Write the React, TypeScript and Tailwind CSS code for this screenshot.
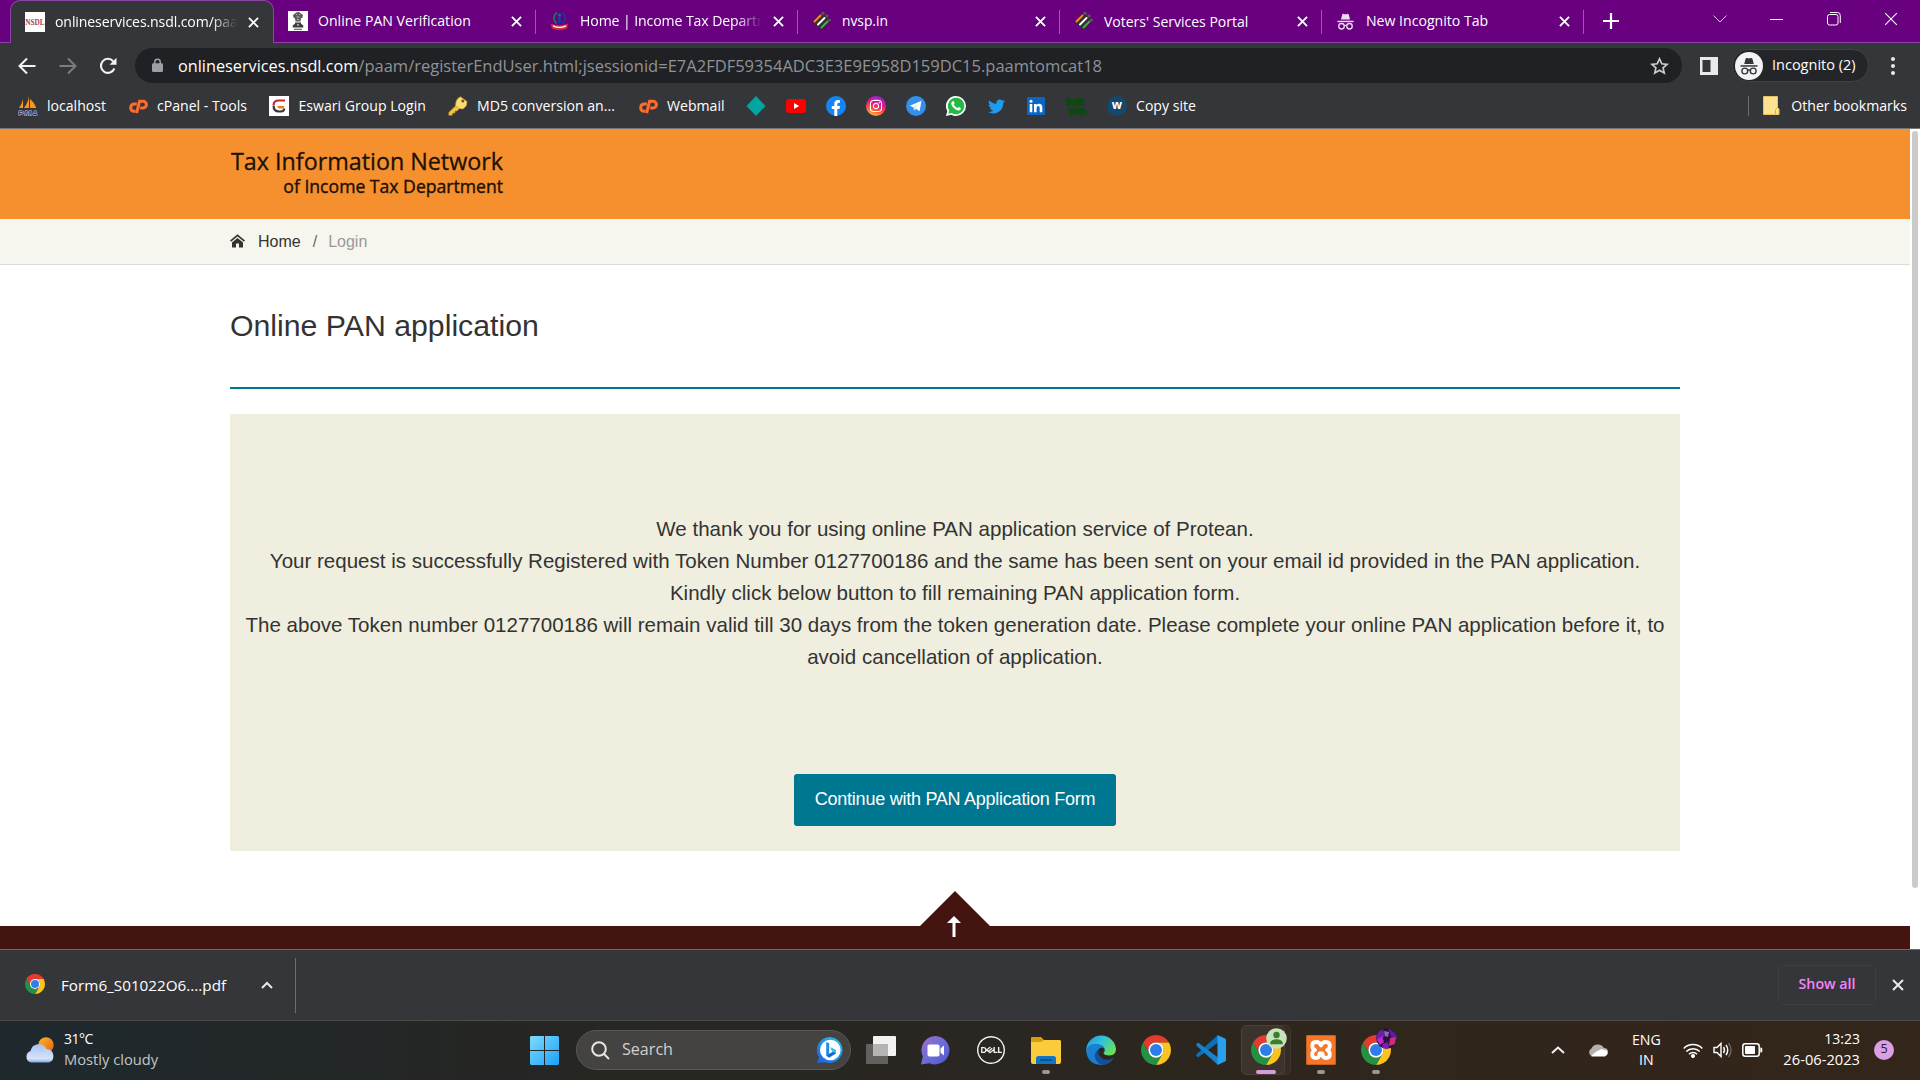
import React from 'react';
import { FaTwitter, FaInstagram } from 'react-icons/fa';
import { SiDell } from 'react-icons/si';

type Kids = { children?: React.ReactNode };

function ChromeLogo({ size }: { size: number }) {
  const wedge = 'M24 12H44.78A24 24 0 0 0 3.22 12L13.6 30A12 12 0 0 1 24 12Z';
  return (
    <svg width={size} height={size} viewBox="0 0 48 48" className="block shrink-0">
      <path d={wedge} fill="#e33b2e" />
      <path d={wedge} fill="#fcc31e" transform="rotate(120 24 24)" />
      <path d={wedge} fill="#229342" transform="rotate(240 24 24)" />
      <circle cx="24" cy="24" r="12.2" fill="#fff" />
      <circle cx="24" cy="24" r="9.6" fill="#2f7de9" />
    </svg>
  );
}

function CloseX({ size = 11, color = '#fff', w = 2 }: { size?: number; color?: string; w?: number }) {
  return (
    <svg width={size} height={size} viewBox="0 0 12 12" className="block shrink-0">
      <path d="M1 1L11 11M11 1L1 11" stroke={color} strokeWidth={w} fill="none" />
    </svg>
  );
}

function Incognito({ size, color }: { size: number; color: string }) {
  return (
    <svg width={size} height={size} viewBox="0 0 20 20" className="block shrink-0">
      <path d="M5.2 8L6.5 3Q7 1.6 8.3 2.1Q10 2.8 11.7 2.1Q13 1.6 13.5 3L14.8 8Z" fill={color} />
      <rect x="1.5" y="9.2" width="17" height="1.5" fill={color} />
      <g fill="none" stroke={color} strokeWidth="1.4">
        <circle cx="5.8" cy="15" r="2.9" />
        <circle cx="14.2" cy="15" r="2.9" />
        <path d="M8.6 14.4Q10 13.6 11.4 14.4" />
      </g>
    </svg>
  );
}

function Nsdl() {
  return (
    <svg width="20" height="20" viewBox="0 0 20 20" className="block">
      <rect width="20" height="20" fill="#fff" />
      <text x=".3" y="13" fontSize="8" fontWeight="700" textLength="19.4" lengthAdjust="spacingAndGlyphs" fill="#b03a48" fontFamily="Liberation Serif">
        NSDL
      </text>
    </svg>
  );
}

function Emblem() {
  return (
    <svg width="20" height="20" viewBox="0 0 20 20" className="block bg-white">
      <path d="M7 2.500Q8.500 .8 10 1Q11.500 .8 13 2.500L15 4L14.500 6.500L13 7.500L12.500 10.500H7.500L7 7.500L5.500 6.500L5 4Z" fill="#5c5c5c" />
      <path d="M8 3.500h1.200M11 3.500h1.200M8.500 6h3M9 8.500h2" stroke="#cfcfcf" strokeWidth=".8" />
      <path d="M7 11.500h6v1.200l2.300 1.800v2H4.700v-2L7 12.700Z" fill="#3c3c3c" />
      <circle cx="10" cy="13.800" r=".9" fill="#ddd" />
      <path d="M6 18.300h8" stroke="#666" strokeWidth="1.2" />
    </svg>
  );
}

function TaxCrest() {
  return (
    <svg width="20" height="20" viewBox="0 0 20 20" className="block">
      <path d="M7 1.500Q1 6 6.500 12.500" stroke="#1f6f5c" strokeWidth="1.8" fill="none" />
      <path d="M12 1.500Q18.500 6 12.500 12.500" stroke="#2a2f95" strokeWidth="1.800" fill="none" />
      <path d="M9.500 4v8" stroke="#233a9a" strokeWidth="2.600" />
      <circle cx="9.500" cy="3.800" r="1.500" fill="#2c55ad" />
      <path d="M.5 12.500Q9.500 16 18.500 12.500L17 17.500Q9.500 20.500 2 17.500Z" fill="#d22738" />
      <path d="M3 14.800Q9.500 18 16 14.800" stroke="#fff" strokeWidth="1.400" fill="none" />
    </svg>
  );
}

function Voter() {
  return (
    <svg width="20" height="20" viewBox="0 0 20 20" className="block">
      <path d="M9 2.500L18 9.500L10 19L1 12Z" fill="#33302f" />
      <circle cx="11" cy="2.300" r="1.700" fill="#555" />
      <circle cx="15" cy="5" r="1.800" fill="#555" />
      <circle cx="17.500" cy="9" r="1.600" fill="#555" />
      <g strokeWidth="1.900" strokeLinecap="round">
        <path d="M2.500 10.500L8.500 4.500" stroke="#f28a26" />
        <path d="M6 13.500L12.500 7" stroke="#fff" />
        <path d="M9.500 16.500L15.500 10.500" stroke="#39b54a" />
      </g>
    </svg>
  );
}

function CPanel() {
  return (
    <svg width="20" height="20" viewBox="0 0 20 20" className="block">
      <g fill="none" stroke="#ff6c2c" strokeWidth="3">
        <path d="M8.800 8H5.800A3.700 3.700 0 0 0 5.800 15.300H7.600" />
        <path d="M8.600 17.200L11.600 5.200H15A3.300 3.300 0 0 1 15 12H12.200" />
      </g>
    </svg>
  );
}

function Tab({ icon, title, fade, size = 'text-[14.1px]' }: { icon: React.ReactNode; title: string; fade?: boolean; size?: string }) {
  return (
    <div className="relative flex h-[42px] w-[262px] shrink-0 items-center pl-[14px]">
      <div className="flex w-[30px] shrink-0">{icon}</div>
      <div
        className={
          'w-[184px] overflow-hidden whitespace-nowrap text-white ' +
          size +
          (fade ? ' tracking-[-0.1px] [mask-image:linear-gradient(to_right,black_85%,transparent_99%)]' : '')
        }
      >
        {title}
      </div>
      <div className="ml-[9px]">
        <CloseX />
      </div>
      <div className="absolute right-0 top-[10px] h-6 w-px bg-[#9a57b4]" />
    </div>
  );
}

function TabStrip() {
  return (
    <div className="relative flex h-[43px] border-b border-[#8d45a5] bg-[#680080]">
      <div className="w-[10px]" />
      <div className="relative z-10 -mb-px flex h-[43px] w-[264px] items-center rounded-t-[10px] border border-b-0 border-[#8d45a5] bg-[#35363a] pl-[14px]">
        <div className="flex w-[30px] shrink-0">
          <Nsdl />
        </div>
        <div className="w-[184px] overflow-hidden whitespace-nowrap text-[14.1px] tracking-[-0.12px] text-white [mask-image:linear-gradient(to_right,black_85%,transparent_99%)]">
          onlineservices.nsdl.com/paam
        </div>
        <div className="ml-[9px]">
          <CloseX />
        </div>
      </div>
      <Tab icon={<Emblem />} title="Online PAN Verification" />
      <Tab icon={<TaxCrest />} title="Home | Income Tax Departm" fade />
      <Tab icon={<Voter />} title="nvsp.in" size="text-[13.8px]" />
      <Tab icon={<Voter />} title="Voters' Services Portal" size="text-[14px]" />
      <Tab icon={<Incognito size={19} color="#e9dcee" />} title="New Incognito Tab" />
      <div className="flex h-[42px] w-[54px] items-center justify-center">
        <svg width="16" height="16" viewBox="0 0 16 16">
          <path d="M8 0V16M0 8H16" stroke="#fff" strokeWidth="2.2" />
        </svg>
      </div>
      <div className="ml-[53px] flex h-[38px] items-center">
        <div className="flex w-[57px] justify-center">
          <svg width="14" height="8" viewBox="0 0 14 8">
            <path d="M.5 .5L7 7L13.5 .5" stroke="#d9c3e2" fill="none" />
          </svg>
        </div>
        <div className="flex w-[57px] justify-center">
          <div className="h-px w-[13px] bg-white" />
        </div>
        <div className="flex w-[57px] justify-center">
          <svg width="14" height="14" viewBox="0 0 14 14" fill="none" stroke="#fff">
            <rect x=".5" y="2.500" width="10.500" height="10.500" rx="2" />
            <path d="M3 .5H10.500Q13.300 .5 13.300 3.500V11" />
          </svg>
        </div>
        <div className="flex w-[58px] justify-center">
          <CloseX size={14} w={0.9} />
        </div>
      </div>
    </div>
  );
}

function Toolbar() {
  return (
    <div className="flex h-[45px] items-center bg-[#35363a] text-white">
      <div className="flex w-[135px] items-center pl-[18px]">
        <svg width="18" height="18" viewBox="0 0 18 18" fill="none" stroke="#f1f3f4" strokeWidth="2">
          <path d="M17.500 9H2M9 1.500L1.500 9L9 16.500" />
        </svg>
        <svg width="18" height="18" viewBox="0 0 18 18" fill="none" stroke="#7c7d80" strokeWidth="2" className="ml-[23px]">
          <path d="M.5 9H16M9 1.500L16.500 9L9 16.500" />
        </svg>
        <svg width="18" height="18" viewBox="0 0 18 18" fill="none" stroke="#f1f3f4" strokeWidth="2.100" className="ml-[22px]">
          <path d="M15.400 11.500A7 7 0 1 1 14.200 4.200" />
          <path d="M17.500 .8V7.700H10.600Z" fill="#f1f3f4" stroke="none" />
        </svg>
      </div>
      <div className="flex h-[35px] w-[1547px] items-center rounded-full bg-[#202124] pl-[17px] pr-[13px]">
        <svg width="11" height="15" viewBox="0 0 12 15" className="mr-[15px]">
          <rect x="0" y="5" width="12" height="9.600" rx="1.400" fill="#9aa0a6" />
          <path d="M3 6V3.600a3 3 0 0 1 6 0V6" stroke="#9aa0a6" strokeWidth="1.600" fill="none" />
        </svg>
        <div className="flex-1 whitespace-nowrap text-[16.520px] leading-[33px] text-[#8f9398]">
          <span className="text-[16.250px] text-white">onlineservices.nsdl.com</span>
          /paam/registerEndUser.html;jsessionid=E7A2FDF59354ADC3E3E9E958D159DC15.paamtomcat18
        </div>
        <svg width="19" height="18" viewBox="0 0 20 19" fill="none" stroke="#c9cbce" strokeWidth="1.800">
          <path d="M10 2L12.400 7.100L18 7.700L13.800 11.500L15 17L10 14.100L5 17L6.200 11.500L2 7.700L7.600 7.100Z" />
        </svg>
      </div>
      <svg width="18" height="18" viewBox="0 0 18 18" className="ml-[18px]">
        <path fillRule="evenodd" d="M0 0H18V18H0ZM2.500 3V15H10.500V3Z" fill="#e8eaed" />
      </svg>
      <div className="ml-[14px] flex h-[33px] w-[137px] items-center rounded-full border border-[#414246] bg-[#242528] pl-[2px]">
        <div className="flex h-7 w-7 items-center justify-center rounded-full bg-[#f1f3f4]">
          <Incognito size={20} color="#35363a" />
        </div>
        <span className="ml-[9px] pb-[2px] text-[14.500px]">Incognito (2)</span>
      </div>
      <div className="ml-[22px] flex flex-col gap-[3px]">
        <i className="h-1 w-1 rounded-full bg-[#e8eaed]" />
        <i className="h-1 w-1 rounded-full bg-[#e8eaed]" />
        <i className="h-1 w-1 rounded-full bg-[#e8eaed]" />
      </div>
    </div>
  );
}

function Mark({ w, text, gap = 'mr-[9.5px]', children }: Kids & { w: string; text?: string; gap?: string }) {
  return (
    <div className={'flex shrink-0 items-center whitespace-nowrap text-[14.1px] text-white ' + w}>
      <div className={'flex h-5 w-5 shrink-0 items-center justify-center ' + gap}>{children}</div>
      {text}
    </div>
  );
}

function Bookmarks() {
  return (
    <div className="flex h-[41px] items-center border-b border-[#75767a] bg-[#35363a] pb-[4px] pl-[18px]">
      <Mark w="w-[110px]" text="localhost" gap="mr-[9px]">
        <svg width="20" height="20" viewBox="0 0 20 20">
          <path d="M5 3V12H1Q4 8 5 3ZM11 0V12H6Q10 7 11 0ZM12 3Q17 7 18 12H12Z" fill="#f7981d" />
          <text x="0" y="19.600" fontSize="8" fontWeight="700" fontStyle="italic" textLength="19.500" fill="#33366f" stroke="#c9cae6" strokeWidth="1" paintOrder="stroke" fontFamily="Liberation Sans">
            PMA
          </text>
        </svg>
      </Mark>
      <Mark w="w-[141px]" text="cPanel - Tools" gap="mr-[9px]">
        <CPanel />
      </Mark>
      <Mark w="w-[179px]" text="Eswari Group Login">
        <svg width="20" height="20" viewBox="0 0 20 20">
          <rect width="20" height="20" fill="#fff" />
          <path d="M16 4.500H9.500Q4.800 4.500 4.600 9" stroke="#c9252d" strokeWidth="2.200" fill="none" />
          <path d="M4.600 9.500Q4.500 15.500 10 15.500H12Q15 15.500 15.200 12.500" stroke="#333" strokeWidth="2.200" fill="none" />
          <path d="M8 10H15.300L14.800 12.500H9.500" fill="#ef7d22" />
        </svg>
      </Mark>
      <Mark w="w-[190px]" text="MD5 conversion an..." gap="mr-[9px]">
        <svg width="20" height="20" viewBox="0 0 20 20">
          <path d="M8.500 9L.8 16.500V19.300H4L4.800 17H7V15H9L11.500 12.300Z" fill="#f3c64a" stroke="#b98a1e" strokeWidth=".7" />
          <path d="M12.500 .8L19 5.500Q19.500 10 15 13Q10.500 13.500 7.500 9.500Q7.500 3 12.500 .8Z" fill="#fbdc74" stroke="#c39526" strokeWidth=".7" />
          <circle cx="14.800" cy="5" r="1.500" fill="#6a5520" />
        </svg>
      </Mark>
      <Mark w="w-[108px]" text="Webmail" gap="mr-[9px]">
        <CPanel />
      </Mark>
      <Mark w="w-[40px]">
        <svg width="20" height="20" viewBox="0 0 20 20">
          <path d="M10 0L19.500 10L10 20L.5 10Z" fill="#00a4a0" />
        </svg>
      </Mark>
      <Mark w="w-[40px]">
        <svg width="20" height="20" viewBox="0 0 20 20">
          <rect y="3" width="20" height="14" rx="3.200" fill="#f00" />
          <path d="M8 7L13.200 10L8 13Z" fill="#fff" />
        </svg>
      </Mark>
      <Mark w="w-[40px]">
        <svg width="20" height="20" viewBox="0 0 20 20">
          <circle cx="10" cy="10" r="10" fill="#1385f4" />
          <path d="M8.300 20V13H5.800V10H8.300V7.800Q8.500 4.200 12 4.100L14 4.300V6.800H12.700Q11.300 6.900 11.300 8.200V10H14L13.500 13H11.300V20Q9.800 20.200 8.300 20Z" fill="#fff" />
        </svg>
      </Mark>
      <Mark w="w-[40px]">
        <div className="flex h-5 w-5 items-center justify-center rounded-full bg-[linear-gradient(20deg,#ffc93c_5%,#fb4b3c_38%,#e1128f_60%,#8a2be8_95%)]">
          <FaInstagram size={14} color="#fff" />
        </div>
      </Mark>
      <Mark w="w-[40px]">
        <svg width="20" height="20" viewBox="0 0 20 20">
          <circle cx="10" cy="10" r="10" fill="#3390ec" />
          <path d="M3.800 9.800L15.500 4.800L13.600 15.200L10 12.700L8.200 14.500L7.600 11.500Z" fill="#fff" />
          <path d="M7.600 11.500L13 7.400L8.900 12.200L8.200 14.500Z" fill="#b9daf8" />
        </svg>
      </Mark>
      <Mark w="w-[40px]">
        <svg width="20" height="20" viewBox="0 0 20 20">
          <path d="M10 0A10 10 0 0 1 10 20Q7.500 20 5.200 18.800L0 20L1.300 15A10 10 0 0 1 10 0Z" fill="#fff" />
          <path d="M10 1.700A8.300 8.300 0 1 1 5.600 17L2.300 17.800L3.200 14.600A8.300 8.300 0 0 1 10 1.700Z" fill="#25b844" />
          <path d="M6.500 5.200Q7.500 4.700 8 5.800L8.600 7.300L7.800 8.500Q9 11 11.500 12L12.700 10.900L14.800 12Q15 14 13 14.600Q10.500 14.800 7.500 11.800Q4.500 8.500 5.500 6.200Z" fill="#fff" />
        </svg>
      </Mark>
      <Mark w="w-[40px]">
        <FaTwitter size={17} color="#1d9bf0" />
      </Mark>
      <Mark w="w-[40px]">
        <svg width="18" height="18" viewBox="0 0 18 18">
          <rect width="18" height="18" rx="1" fill="#0a66c2" />
          <path d="M2.700 7H5.300V15.200H2.700ZM7 7H9.500V8.200Q10.200 6.800 12.200 6.800Q15.300 6.900 15.300 10.500V15.200H12.700V11Q12.700 9 11.200 9Q9.600 9 9.600 11V15.200H7Z" fill="#fff" />
          <circle cx="4" cy="4.200" r="1.500" fill="#fff" />
        </svg>
      </Mark>
      <Mark w="w-[41px]">
        <svg width="22" height="20" viewBox="0 0 22 20" className="shrink-0" fill="#0a4a0c" stroke="#0a4a0c" strokeWidth=".9" fontFamily="Lato" fontWeight="900">
          <text x="1" y="9" fontSize="9.500" textLength="18">built</text>
          <text x="3" y="18.500" fontSize="9.500" textLength="18.500" lengthAdjust="spacingAndGlyphs">With</text>
        </svg>
      </Mark>
      <Mark w="w-[110px]" text="Copy site" gap="mr-[9px]">
        <div className="flex h-5 w-5 items-center justify-center rounded-full bg-[#14496b] pb-px font-['Open_Sans'] text-[12px] font-bold">w</div>
      </Mark>
      <div className="ml-auto flex items-center pr-[13px] text-[14.1px] text-white">
        <div className="h-5 w-px bg-[#6d6e72]" />
        <svg width="17" height="19" viewBox="0 0 17 19" className="ml-[14px] mr-[11px]">
          <path d="M.5 .5H14.500V11.500L16 13V18.500H.5Z" fill="#fde293" stroke="#e5c35a" />
          <path d="M12.500 18V13.500L14.500 11.500" stroke="#d8b040" fill="none" />
        </svg>
        Other bookmarks
      </div>
    </div>
  );
}

function Page() {
  return (
    <div className="relative flex h-[820px] bg-white font-['Liberation_Sans',Arial,sans-serif] text-[#333]">
      <div className="flex w-[1910px] flex-col">
        <header className="h-[90px] bg-[#f6902e] pl-[230px] pt-[15px]">
          <div className="w-[273px] text-right font-['Open_Sans',sans-serif] text-[#1c1206]">
            <div className="whitespace-nowrap text-[23.300px] leading-[34px] [-webkit-text-stroke:0.3px_#1c1206]">Tax Information Network</div>
            <div className="-mt-[4px] whitespace-nowrap text-[17.600px] leading-[24px] [-webkit-text-stroke:0.4px_#1c1206]">of Income Tax Department</div>
          </div>
        </header>
        <nav className="flex h-[46px] items-center border-b border-[#dcdcdc] bg-[#f6f6ee] pl-[230px] text-[16px]">
          <svg width="15" height="14" viewBox="0 0 15 14" className="-mt-px">
            <path d="M.5 7.200L7.500 1.300L14.500 7.200" stroke="#333" strokeWidth="1.700" fill="none" />
            <path d="M7.500 4L13 8.500V13.500H9V9.500H6V13.500H2V8.500Z" fill="#333" />
          </svg>
          <span className="ml-[13px]">Home</span>
          <span className="ml-[12px] text-[#666]">/</span>
          <span className="ml-[11px] text-[#999]">Login</span>
        </nav>
        <main className="ml-[230px] w-[1450px]">
          <h1 className="pt-[39px] text-[30.250px] leading-[43px]">Online PAN application</h1>
          <div className="mt-[40px] h-[2px] bg-[#007791]" />
          <section className="mt-[25px] flex h-[437px] flex-col items-center bg-[#f0eede] pt-[99px]">
            <div className="text-center text-[20.540px] leading-8">
              We thank you for using online PAN application service of Protean.
              <br />
              Your request is successfully Registered with Token Number 0127700186 and the same has been sent on your email id provided in the PAN application.
              <br />
              Kindly click below button to fill remaining PAN application form.
              <br />
              The above Token number 0127700186 will remain valid till 30 days from the token generation date. Please complete your online PAN application before it, to
              <br />
              avoid cancellation of application.
            </div>
            <button className="mt-[101px] h-[52px] w-[322px] whitespace-nowrap rounded-[3px] bg-[#007791] pb-px text-[18px] tracking-[-0.25px] text-white">
              Continue with PAN Application Form
            </button>
          </section>
        </main>
        <footer className="mt-auto flex flex-col items-center">
          <svg width="70" height="35" viewBox="0 0 70 35" className="block">
            <path d="M35 0L70 35H0Z" fill="#441410" />
          </svg>
          <div className="flex h-[23px] w-full justify-center bg-[#441410]">
            <svg width="14" height="21" viewBox="0 0 14 21" className="-mt-[10px] mr-[2px]">
              <path d="M7 0L14 7H0Z" fill="#fff" />
              <path d="M7 5V21" stroke="#fff" strokeWidth="3" />
            </svg>
          </div>
        </footer>
      </div>
      <div className="ml-[2px] mt-[2px] h-[757px] w-[6px] rounded-full bg-[#cbcbcb]" />
    </div>
  );
}

function Downloads() {
  return (
    <div className="flex h-[72px] items-center border-b border-t border-b-[#4b4b49] border-t-[#6d6a6b] bg-[#35363a] pl-[25px] text-white">
      <div className="-mt-[3px]">
        <ChromeLogo size={20} />
      </div>
      <span className="ml-[16px] text-[15.250px]">Form6_S01022O6....pdf</span>
      <svg width="12" height="8" viewBox="0 0 12 8" className="ml-[35px]">
        <path d="M1 7L6 2L11 7" stroke="#e8eaed" strokeWidth="2" fill="none" />
      </svg>
      <div className="ml-[22px] h-[55px] w-px bg-[#6d6e72]" />
      <div className="ml-auto flex h-10 w-[98px] items-center justify-center rounded-[5px] border border-[#3e3f43] -mt-px pb-[2px] text-[14.200px] font-semibold text-[#f584fb]">
        Show all
      </div>
      <div className="-mt-px ml-[16px] mr-[16px]">
        <CloseX size={12} w={2} color="#e8eaed" />
      </div>
    </div>
  );
}

function Slot({ children, dot }: Kids & { dot?: 'idle' | 'active' }) {
  return (
    <div className="relative flex h-[58px] w-[55px] shrink-0 items-center justify-center">
      {children}
      {dot === 'idle' && <i className="absolute bottom-[5px] h-1 w-2 rounded-full bg-[#9c9791]" />}
      {dot === 'active' && <i className="absolute bottom-[5px] h-1 w-5 rounded-full bg-[#d89be0]" />}
    </div>
  );
}

function Taskbar() {
  return (
    <div className="flex h-[59px] items-center overflow-hidden bg-[linear-gradient(90deg,#1e292e_0%,#252624_25%,#2a2622_50%,#30261c_75%,#33251a_100%)] pb-px text-white">
      <div className="flex w-[517px] items-center pl-[25px]">
        <svg width="30" height="27" viewBox="0 0 30 27">
          <defs>
            <linearGradient id="sun" x1="0" y1="0" x2="1" y2="1">
              <stop offset="0" stopColor="#f9b52b" />
              <stop offset="1" stopColor="#e8640c" />
            </linearGradient>
            <linearGradient id="cloud" x1="0" y1="0" x2="0" y2="1">
              <stop offset="0" stopColor="#a9c2f5" />
              <stop offset=".8" stopColor="#d6e3fb" />
              <stop offset="1" stopColor="#7fa1e0" />
            </linearGradient>
          </defs>
          <circle cx="21" cy="8" r="7.700" fill="url(#sun)" />
          <path d="M6 25.500A6 6 0 0 1 5.500 14A8.500 8.500 0 0 1 21.500 12A7 7 0 0 1 24 25.500Z" fill="url(#cloud)" />
        </svg>
        <div className="-mt-[2px] ml-[9px] leading-5">
          <div className="text-[14px] tracking-[-0.5px]">31°C</div>
          <div className="text-[14.700px] text-[#c4c5c4]">Mostly cloudy</div>
        </div>
      </div>
      <Slot>
        <svg width="29" height="29" viewBox="0 0 29 29">
          <defs>
            <linearGradient id="win" x1="0" y1="0" x2="1" y2="1" gradientUnits="objectBoundingBox">
              <stop offset="0" stopColor="#7ddcff" />
              <stop offset="1" stopColor="#1ca0f8" />
            </linearGradient>
          </defs>
          <path d="M1 0H14V14H0V1ZM15 0H28L29 1V14H15ZM0 15H14V29H1L0 28ZM15 15H29V28L28 29H15Z" fill="url(#win)" />
        </svg>
      </Slot>
      <div className="ml-[4px] flex h-10 w-[275px] shrink-0 items-center rounded-full border border-[#5a5856] bg-[#454341] pl-[14px]">
        <svg width="19" height="19" viewBox="0 0 19 19" fill="none" stroke="#e6e6e6" strokeWidth="2">
          <circle cx="8" cy="8" r="6.800" />
          <path d="M13 13L18 18" />
        </svg>
        <span className="ml-[12px] w-[195px] pb-px text-[16.100px] text-[#d0cfce]">Search</span>
        <svg width="26" height="26" viewBox="0 0 26 26">
          <defs>
            <linearGradient id="bing" x1="0" y1="1" x2="1" y2="0">
              <stop offset="0" stopColor="#1a5fe0" />
              <stop offset="1" stopColor="#28c4f0" />
            </linearGradient>
          </defs>
          <path d="M13 0A13 13 0 1 1 8 25.200L0 26L2 20A13 13 0 0 1 13 0Z" fill="url(#bing)" />
          <circle cx="13.300" cy="13" r="10.300" fill="#fff" />
          <path d="M9.200 5L12.200 6.200V17L9.200 18.800Z" fill="#1b8fe8" />
          <path d="M9.200 18.500L12.200 16.700L16 14.800L13.500 10.500L19 13.200V16.500L12 20.800Z" fill="#1567d8" />
          <path d="M13.200 10.200L19 13V16.200L15 14.500Z" fill="#2fc8e0" />
        </svg>
      </div>
      <div className="ml-[2px] flex">
        <Slot>
          <svg width="30" height="28" viewBox="0 0 30 28">
            <rect x="7" y="0" width="23" height="20" rx="1" fill="#f2f2f2" />
            <rect x="0" y="8" width="22" height="20" rx="1" fill="#626160" />
            <rect x="7" y="8" width="15" height="12" fill="#b5b4b3" />
          </svg>
        </Slot>
        <Slot>
          <svg width="29" height="29" viewBox="0 0 29 29">
            <defs>
              <linearGradient id="chat" x1="0" y1="0" x2="1" y2="1">
                <stop offset="0" stopColor="#a06cc4" />
                <stop offset=".5" stopColor="#6d6cd8" />
                <stop offset="1" stopColor="#4f58c8" />
              </linearGradient>
            </defs>
            <path d="M14.500 0A14.200 14.200 0 1 1 8.500 27.200L0 28.500L1.800 20.500A14.300 14.300 0 0 1 14.500 0Z" fill="url(#chat)" />
            <rect x="6.500" y="8.500" width="12" height="12" rx="1.800" fill="#fff" />
            <path d="M19.500 12.500L23 9.500V19.500L19.500 16.500Z" fill="#fff" />
          </svg>
        </Slot>
        <Slot>
          <SiDell size={28} color="#f2f2f2" />
        </Slot>
        <Slot dot="idle">
          <svg width="30" height="27" viewBox="0 0 30 27">
            <path d="M0 1Q0 0 1 0H10L13 3V8H0Z" fill="#d99b0a" />
            <path d="M0 5H10L13 3H29L30 4V25Q30 27 28 27H2Q0 27 0 25Z" fill="#fccb3c" />
            <path d="M5 27V21.500Q5 19 7.500 19H22.500Q25 19 25 21.500V27Z" fill="#1274c4" />
            <path d="M9 23H21" stroke="#0b4a86" strokeWidth="1.500" />
          </svg>
        </Slot>
        <Slot>
          <svg width="30" height="30" viewBox="0 0 30 30">
            <defs>
              <linearGradient id="edgeTop" x1="0" y1="0" x2="1" y2=".6">
                <stop offset="0" stopColor="#2a8fd6" />
                <stop offset=".5" stopColor="#33c2dc" />
                <stop offset="1" stopColor="#67e05a" />
              </linearGradient>
            </defs>
            <path d="M.3 13A15 15 0 0 1 30 14Q30 20 23.500 20.500Q18 20.500 17.500 18Q19.500 16 18.500 13.500Q16 9 9 10Q3 11 .3 17Z" fill="url(#edgeTop)" />
            <path d="M0 15Q3 8.500 10 8.700Q17 9 19 14Q15 10.500 12 15Q9.500 20 13 24Q18 29 27 23.500Q23 30 15 30Q1 29 0 15Z" fill="#1a7fd0" />
            <path d="M12.500 14.500Q8 17 9 22.500Q10.500 28 16 30Q24 29.500 28 22.800Q20 27 15 22.500Q11.500 19 12.500 14.500Z" fill="#134f96" />
          </svg>
        </Slot>
        <Slot>
          <ChromeLogo size={30} />
        </Slot>
        <Slot>
          <svg width="30" height="30" viewBox="0 0 30 30">
            <path d="M0 20L2 22.500L22 7.500V0L.8 19Z" fill="#0f6fb5" />
            <path d="M0 10L2 7.500L22 22.500V30L.8 11Z" fill="#1583cf" />
            <path d="M21.500 0L29 3.500Q30 4 30 5V25Q30 26 29 26.500L21.500 30Z" fill="#27a0ee" />
          </svg>
        </Slot>
        <div className="relative">
          <div className="absolute left-[3px] top-[4px] h-[50px] w-[50px] rounded-[6px] border border-[#40372e] bg-[#352c24]" />
          <div className="absolute left-[3px] top-[4px] h-[50px] w-[44px] rounded-[6px] border border-[#4a4139] bg-[#3c342c]" />
          <Slot dot="active">
            <ChromeLogo size={30} />
            <svg width="21" height="21" viewBox="0 0 21 21" className="absolute left-[28px] top-[7px]">
              <circle cx="10.500" cy="10.500" r="10.300" fill="#c8e2bb" />
              <circle cx="10.500" cy="7" r="3.200" fill="#3c7d28" />
              <path d="M4.300 16.200V14.500Q5 11.500 10.500 11.300Q16 11.500 16.700 14.500V16.200Z" fill="#3c7d28" />
            </svg>
          </Slot>
        </div>
        <Slot dot="idle">
          <div className="flex h-[30px] w-[30px] items-center justify-center rounded-[2px] bg-[#f4772a] shadow-[inset_0_0_0_1px_#c9621f]">
            <svg width="22" height="20" viewBox="0 0 22 20" fill="none" stroke="#fff" strokeWidth="3.800" strokeLinejoin="round">
              <path d="M11 5.500Q10 2 6 2Q2.200 2 2.200 5.800Q2.200 9 5 10Q2.200 11 2.200 14.200Q2.200 18 6 18Q9.500 18 9.500 13.500H12.500Q12.500 18 16 18Q19.800 18 19.800 14.200Q19.800 11 17 10Q19.800 9 19.800 5.800Q19.800 2 16 2Q12 2 11 5.500Z" />
            </svg>
          </div>
        </Slot>
        <Slot dot="idle">
          <ChromeLogo size={30} />
          <svg width="21" height="21" viewBox="0 0 21 21" className="absolute left-[28px] top-[7px]">
            <defs>
              <clipPath id="avatar">
                <circle cx="10.500" cy="10.500" r="10.200" />
              </clipPath>
            </defs>
            <g clipPath="url(#avatar)">
              <rect width="21" height="21" fill="#2a1240" />
              <path d="M0 4L7 1L9 8L3 13L0 12Z" fill="#6d1fa8" />
              <path d="M1 12L6 8L8 14L4 17Z" fill="#c326c9" />
              <path d="M12 0L21 6V12L15 9Z" fill="#5a1e9c" />
              <path d="M14 10L20 9L19 16L13 18Z" fill="#d32a7a" />
              <path d="M8 3L13 4L12 9L9 8Z" fill="#8d6bb8" />
              <path d="M7 16L12 14L13 21H6Z" fill="#7c1fb8" />
            </g>
          </svg>
        </Slot>
      </div>
      <div className="ml-auto flex items-center">
        <svg width="14" height="8" viewBox="0 0 14 8">
          <path d="M1 7L7 1.500L13 7" stroke="#f3f3f3" strokeWidth="2" fill="none" />
        </svg>
        <svg width="20" height="14" viewBox="0 0 20 14" className="ml-[23px]">
          <path d="M4 13A4 4 0 0 1 3.500 5.500A7 7 0 0 1 16 5A4 4 0 0 1 16 13Z" fill="#b4b0ac" />
          <path d="M3 13Q8 8 13.500 6L18.500 7.500Q21 11 17 13.500H4Z" fill="#fff" />
        </svg>
        <div className="-mt-px ml-[23px] w-[30px] text-center text-[14.200px] leading-5">
          <div>ENG</div>
          <div>IN</div>
        </div>
        <svg width="20" height="15" viewBox="0 0 20 15" fill="none" stroke="#fff" strokeWidth="1.500" className="ml-[22px]">
          <path d="M.7 5.500A13 13 0 0 1 19.300 5.500M3.300 8.500A9.500 9.500 0 0 1 16.700 8.500M6 11.200A5.800 5.800 0 0 1 14 11.200" />
          <circle cx="10" cy="13" r="1.300" fill="#fff" />
        </svg>
        <svg width="20" height="18" viewBox="0 0 20 18" fill="none" stroke="#fff" strokeWidth="1.400" className="ml-[10px]">
          <path d="M1 6.500H4L8 2.500V15.500L4 11.500H1ZM10.500 6Q12.500 9 10.500 12M13 3.800Q16.500 9 13 14.200" />
          <path d="M15.500 1.800Q20.500 9 15.500 16.200" stroke="#6f665e" />
        </svg>
        <svg width="21" height="14" viewBox="0 0 21 14" fill="none" className="ml-[9px]">
          <rect x=".8" y=".8" width="16.400" height="12.400" rx="2.500" stroke="#fff" strokeWidth="1.500" />
          <rect x="3" y="3" width="10" height="8" rx=".8" fill="#fff" />
          <path d="M18.300 4.500H19Q20.300 4.500 20.300 6V8Q20.300 9.500 19 9.500H18.300Z" fill="#fff" />
        </svg>
        <div className="-mt-[3px] ml-[20px] text-right leading-5">
          <div className="text-[14px]">13:23</div>
          <div className="text-[14.700px]">26-06-2023</div>
        </div>
        <div className="ml-[14px] mr-[26px] flex h-5 w-5 items-center justify-center rounded-full bg-[#dc9ee6] pb-px text-[12.500px] leading-none text-[#222]">5</div>
      </div>
    </div>
  );
}

export default function App() {
  return (
    <div className="h-[1080px] w-[1920px] overflow-hidden font-['Open_Sans',sans-serif]">
      <TabStrip />
      <Toolbar />
      <Bookmarks />
      <Page />
      <Downloads />
      <Taskbar />
    </div>
  );
}
